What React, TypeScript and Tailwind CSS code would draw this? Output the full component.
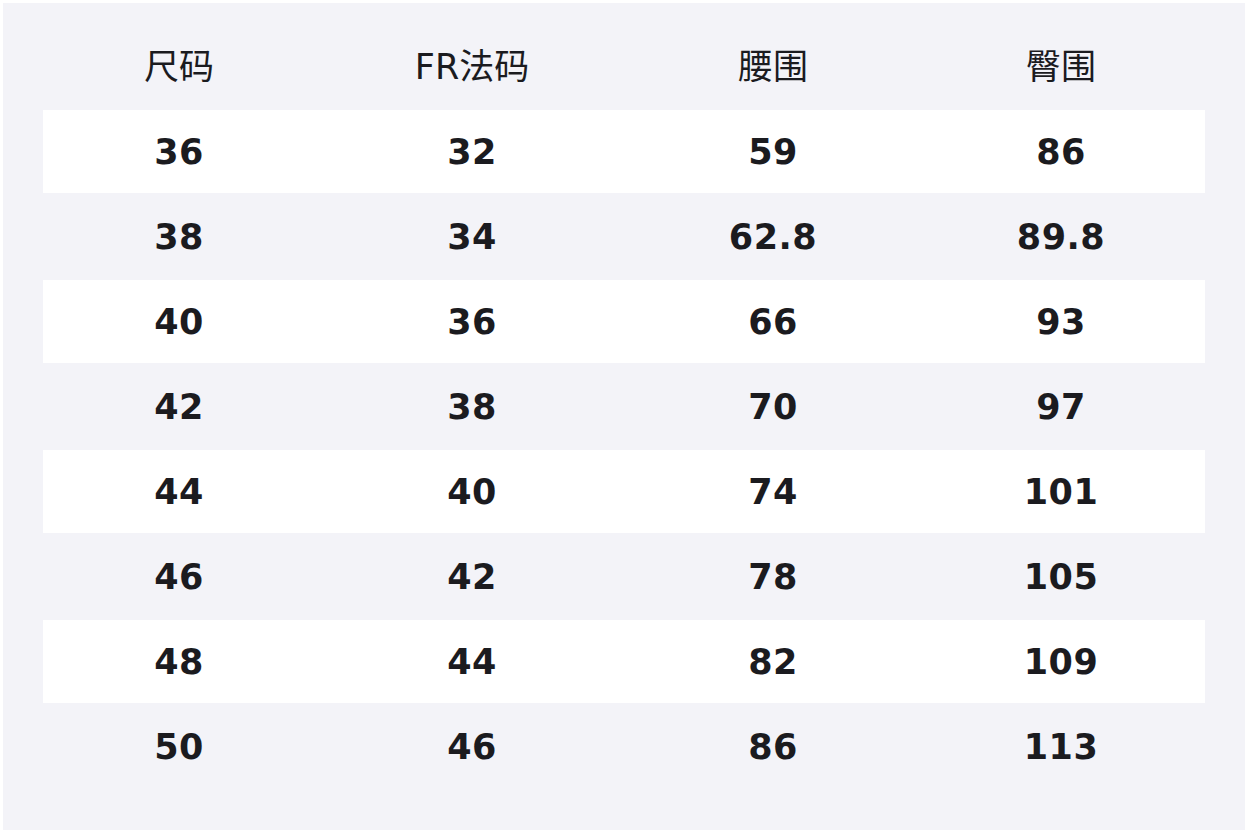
const headers = ["尺码", "FR法码", "腰围", "臀围"];

const rows: string[][] = [
  ["36", "32", "59", "86"],
  ["38", "34", "62.8", "89.8"],
  ["40", "36", "66", "93"],
  ["42", "38", "70", "97"],
  ["44", "40", "74", "101"],
  ["46", "42", "78", "105"],
  ["48", "44", "82", "109"],
  ["50", "46", "86", "113"],
];

const cols = "grid grid-cols-[272px_314px_288px_288px]";

export default function App() {
  return (
    <div className="w-[1248px] h-[833px] bg-white p-[3px] font-['DejaVu_Sans','Noto_Sans_CJK_SC',sans-serif] text-[#1b1b1f]">
      <div className="h-full bg-[#f3f3f8] px-10 pb-10">
        <div className={`${cols} h-[107px] items-center pt-[22px]`}>
          {headers.map((h) => (
            <div key={h} className="text-center text-[35px] leading-none">
              {h}
            </div>
          ))}
        </div>
        {rows.map((row, i) => (
          <div
            key={i}
            className={`${cols} items-center pt-[2px] ${
              i % 2 === 0 ? "bg-white h-[83px]" : "h-[87px]"
            }`}
          >
            {row.map((v, j) => (
              <div key={j} className="text-center text-[35px] font-bold leading-none tracking-[0.5px]">
                {v}
              </div>
            ))}
          </div>
        ))}
      </div>
    </div>
  );
}
